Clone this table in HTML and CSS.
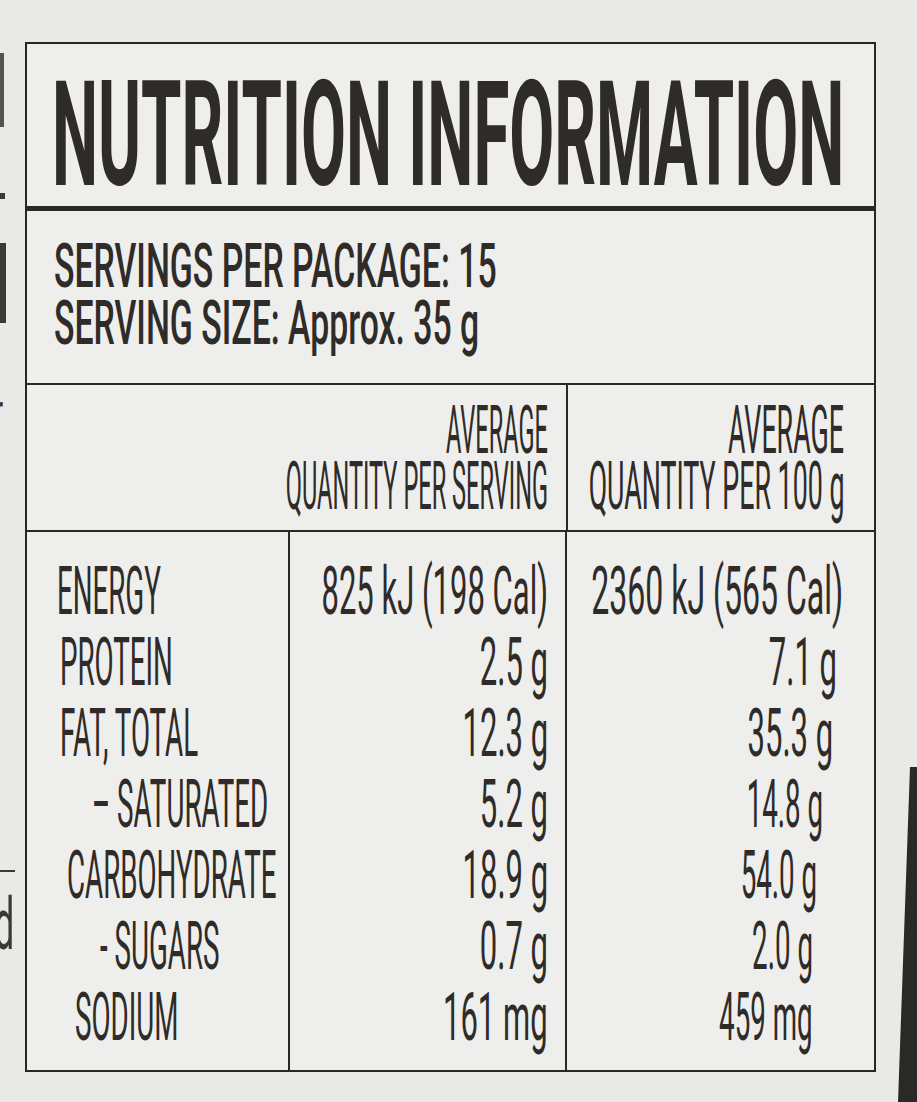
FILE: index.html
```html
<!DOCTYPE html>
<html>
<head>
<meta charset="utf-8">
<link rel="stylesheet" href="styles.css">
</head>
<body>
<div class="page">
  <div class="edge">
    <div class="frag bar1"></div>
    <div class="frag tick"></div>
    <div class="frag bar2"></div>
    <div class="glyph g-r"><span class="t">r</span></div>
    <div class="frag rule"></div>
    <div class="glyph g-d"><span class="t">d</span></div>
  </div>
  <div class="label">
    <div class="title"><span class="t tb">NUTRITION INFORMATION</span></div>
    <div class="serv">
      <div class="sline"><span class="t ts">SERVINGS PER PACKAGE: 15</span></div>
      <div class="sline"><span class="t ts">SERVING SIZE: Approx. 35 g</span></div>
    </div>
    <div class="head">
      <div class="hcell hc1">
        <div class="hline"><span class="t th">AVERAGE</span></div>
        <div class="hline"><span class="t th">QUANTITY PER SERVING</span></div>
      </div>
      <div class="hcell hc2">
        <div class="hline"><span class="t th">AVERAGE</span></div>
        <div class="hline"><span class="t th">QUANTITY PER 100 g</span></div>
      </div>
    </div>
    <div class="data">
      <div class="col names">
        <div class="row p0"><span class="t td">ENERGY</span></div>
        <div class="row p1"><span class="t td">PROTEIN</span></div>
        <div class="row p1"><span class="t td">FAT, TOTAL</span></div>
        <div class="row p4"><span class="t td">– SATURATED</span></div>
        <div class="row p2"><span class="t td">CARBOHYDRATE</span></div>
        <div class="row p5"><span class="t td">- SUGARS</span></div>
        <div class="row p3"><span class="t td">SODIUM</span></div>
      </div>
      <div class="col vals v1">
        <div class="row"><span class="t td">825 kJ (198 Cal)</span></div>
        <div class="row"><span class="t td">2.5 g</span></div>
        <div class="row"><span class="t td">12.3 g</span></div>
        <div class="row"><span class="t td">5.2 g</span></div>
        <div class="row"><span class="t td">18.9 g</span></div>
        <div class="row"><span class="t td">0.7 g</span></div>
        <div class="row"><span class="t td">161 mg</span></div>
      </div>
      <div class="col vals v2">
        <div class="row q0"><span class="t td wide">2360 kJ (565 Cal)</span></div>
        <div class="row q1"><span class="t td">7.1 g</span></div>
        <div class="row q2"><span class="t td">35.3 g</span></div>
        <div class="row q3"><span class="t td narrow">14.8 g</span></div>
        <div class="row q4"><span class="t td narrow">54.0 g</span></div>
        <div class="row q5"><span class="t td narrow">2.0 g</span></div>
        <div class="row q5"><span class="t td narrow">459 mg</span></div>
      </div>
    </div>
  </div>
  <div class="shade"></div>
</div>
</body>
</html>
```
FILE: styles.css
```css
html, body {
  margin: 0;
  padding: 0;
}
body {
  background: #e9e9e7;
  width: 917px;
  height: 1102px;
  overflow: hidden;
  font-family: Roboto, "Liberation Sans", sans-serif;
  color: #2e2b29;
}
.page {
  display: flex;
  height: 1102px;
}

/* fragments of the neighbouring panel, cut by the left edge */
.edge {
  width: 25px;
  flex: none;
  overflow: hidden;
  display: flex;
  flex-direction: column;
  align-items: flex-start;
}
.frag {
  background: #3b3937;
  flex: none;
}
.bar1 {
  margin-top: 53px;
  width: 4px;
  height: 74px;
  background: #55524f;
}
.tick {
  margin-top: 66px;
  width: 5px;
  height: 6px;
}
.bar2 {
  margin-top: 44px;
  width: 6px;
  height: 80px;
}
.glyph {
  flex: none;
  color: #3b3937;
  font-weight: 400;
}
.g-r {
  margin-top: 69px;
  margin-left: -7px;
  font-size: 50px;
  line-height: 40px;
}
.g-r .t {
  transform: scaleX(0.6);
  transform-origin: left center;
}
.rule {
  margin-top: 438px;
  width: 15px;
  height: 2px;
}
.g-d {
  margin-top: 23px;
  margin-left: -6px;
  font-size: 72px;
  line-height: 60px;
}
.g-d .t {
  transform: scaleX(0.5);
  transform-origin: left center;
}

.label {
  margin-top: 42px;
  width: 851px;
  height: 1030px;
  flex: none;
  box-sizing: border-box;
  border: 2px solid #292725;
  background: #eeeeec;
  display: flex;
  flex-direction: column;
  overflow: hidden;
}
.t {
  display: inline-block;
  white-space: nowrap;
  flex: none;
}
.title {
  height: 167px;
  box-sizing: border-box;
  padding: 17px 0 0 25px;
  border-bottom: 5px solid #2b2927;
}
.tb {
  font-size: 146px;
  line-height: 150px;
  font-weight: 700;
  transform: scaleX(0.447);
  transform-origin: left center;
}
.serv {
  height: 174px;
  box-sizing: border-box;
  padding: 26px 0 0 27px;
  border-bottom: 2px solid #2b2927;
}
.sline {
  height: 57px;
}
.ts {
  font-size: 62px;
  line-height: 57px;
  font-weight: 500;
  transform: scaleX(0.545);
  transform-origin: left center;
}
.head {
  display: grid;
  grid-template-columns: 541px minmax(0, 1fr);
  height: 145px;
  border-bottom: 2px solid #2b2927;
}
.hcell {
  padding-top: 17px;
  display: flex;
  flex-direction: column;
  min-width: 0;
}
.hc1 {
  border-right: 2px solid #2b2927;
  padding-right: 18px;
}
.hc2 {
  padding-right: 30px;
}
.hline {
  height: 56px;
  display: flex;
  justify-content: flex-end;
}
.th {
  font-size: 67px;
  line-height: 56px;
  font-weight: 400;
  transform: scaleX(0.352);
  transform-origin: right center;
}
.hc2 .th {
  transform: scaleX(0.4);
}
.data {
  flex: 1;
  display: grid;
  grid-template-columns: 263px 277px minmax(0, 1fr);
}
.col {
  padding-top: 24px;
  min-width: 0;
}
.names {
  border-right: 2px solid #2b2927;
}
.v1 {
  border-right: 2px solid #2b2927;
  padding-right: 17px;
}
.v2 {
  padding-right: 31px;
}
.row {
  height: 71px;
  display: flex;
}
.vals .row {
  justify-content: flex-end;
}
.td {
  font-size: 66px;
  line-height: 71px;
  font-weight: 400;
}
.names .td {
  transform: scaleX(0.42);
  transform-origin: left center;
}
.vals .td {
  transform: scaleX(0.47);
  transform-origin: right center;
}
.vals .td.wide {
  transform: scaleX(0.485);
}
.vals .td.narrow {
  transform: scaleX(0.42);
}
.p0 { padding-left: 30px; }
.p1 { padding-left: 33px; }
.p2 { padding-left: 40px; }
.p3 { padding-left: 48px; }
.p4 { padding-left: 65px; }
.p5 { padding-left: 73px; }
.q1 { padding-right: 6px; }
.q2 { padding-right: 10px; }
.q3 { padding-right: 20px; }
.q4 { padding-right: 26px; }
.q5 { padding-right: 30px; }
.shade {
  margin-left: auto;
  margin-top: 767px;
  width: 19px;
  height: 335px;
  flex: none;
  background: #2a2927;
  clip-path: polygon(12px 0, 100% 0, 100% 100%, 0 100%);
}
```
